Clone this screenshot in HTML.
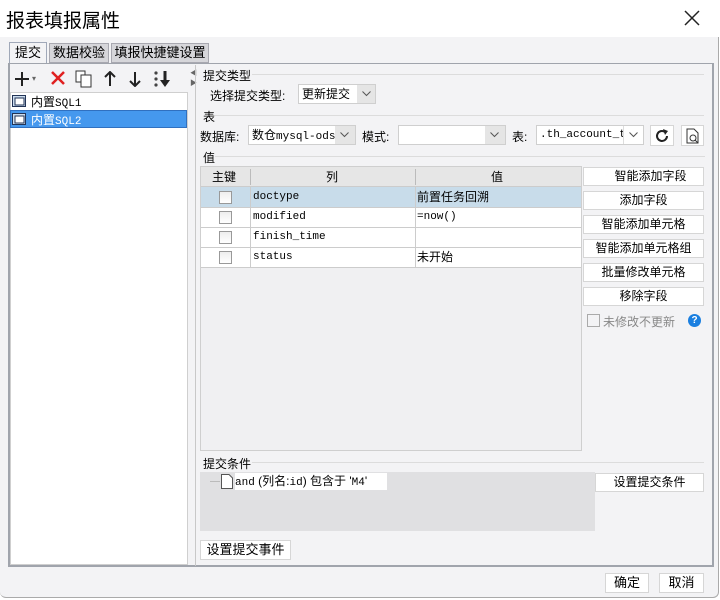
<!DOCTYPE html>
<html><head><meta charset="utf-8"><style>
*{box-sizing:border-box;margin:0;padding:0}
body{width:720px;height:600px;background:#fff;font-family:"Liberation Sans","Noto Sans CJK SC",sans-serif;font-size:12px;color:#000;position:relative;overflow:hidden}
.a{position:absolute}
.btn{position:absolute;background:#fff;border:1px solid #d6d6d6;text-align:center;font-size:12px;line-height:17px}
.mono{font-family:"Liberation Mono","Noto Sans CJK SC",monospace;font-size:11px}
.combo{position:absolute;background:#fff;border:1px solid #cfcfcf;height:20px;line-height:18px;padding-left:3px;overflow:hidden;white-space:nowrap}
.dd{position:absolute;right:0;top:0;width:20px;height:18px;background:#e5e5e5}
.dd svg{position:absolute;left:5px;top:6px}
.hl{position:absolute;height:1px;background:#dcdcdc}
.cb{position:absolute;width:13px;height:13px;border:1px solid #999;background:linear-gradient(#eee,#fff)}
.row{position:absolute;line-height:20px;height:20px}
</style></head><body>
<div class="a" style="left:0;top:0;width:719px;height:598px;background:#f3f3f5;border-right:1px solid #aaa;border-bottom:1px solid #aaa;border-radius:0 0 6px 6px"></div>
<div class="a" style="left:0;top:0;width:719px;height:37px;background:#fff"></div>
<div class="a" style="left:6px;top:6px;font-size:19px">报表填报属性</div>
<svg class="a" style="left:684px;top:10px" width="16" height="16"><path d="M1 1L15 15M15 1L1 15" stroke="#222" stroke-width="1.5"/></svg>

<div class="a" style="left:9px;top:42px;width:38px;height:22px;background:#f3f3f5;border:1px solid #a0a8b8;border-bottom:none;text-align:center;line-height:20px;font-size:13px">提交</div>
<div class="a" style="left:49px;top:43px;width:60px;height:20px;background:#d6d6da;border:1px solid #a8a8b0;text-align:center;line-height:18px;font-size:13px">数据校验</div>
<div class="a" style="left:111px;top:43px;width:98px;height:20px;background:#d6d6da;border:1px solid #a8a8b0;text-align:center;line-height:18px;font-size:13px">填报快捷键设置</div>
<div class="a" style="left:8px;top:63px;width:706px;height:504px;border:2px solid #a0a4ac;border-top:1px solid #a0a4ac"></div>

<svg class="a" style="left:15px;top:72px" width="14" height="14"><path d="M7 0V14M0 7H14" stroke="#222" stroke-width="2"/></svg>
<div class="a" style="left:32px;top:74px;font-size:8px;color:#666">▾</div>
<svg class="a" style="left:51px;top:71px" width="14" height="14"><path d="M1 1L13 13M13 1L1 13" stroke="#e02020" stroke-width="2.5"/></svg>
<svg class="a" style="left:75px;top:70px" width="18" height="18"><rect x="1" y="1" width="9" height="11" fill="#fff" stroke="#333"/><rect x="6" y="5" width="10" height="12" fill="#fff" stroke="#333"/></svg>
<svg class="a" style="left:104px;top:71px" width="12" height="16"><path d="M6 1L6 15M1 6L6 1L11 6" stroke="#222" stroke-width="2" fill="none"/></svg>
<svg class="a" style="left:129px;top:71px" width="12" height="16"><path d="M6 1L6 15M1 10L6 15L11 10" stroke="#222" stroke-width="2" fill="none"/></svg>
<svg class="a" style="left:153px;top:70px" width="20" height="18"><circle cx="3" cy="3" r="1.6" fill="#444"/><circle cx="3" cy="9" r="1.6" fill="#444"/><circle cx="3" cy="15" r="1.6" fill="#444"/><path d="M12 1L12 12" stroke="#222" stroke-width="3"/><path d="M7 10L17 10L12 17Z" fill="#222"/></svg>
<div class="a" style="left:10px;top:92px;width:178px;height:473px;background:#fff;border:1px solid #cfcfcf"></div>
<svg class="a" style="left:12px;top:95px" width="14" height="12"><rect x="0.5" y="0.5" width="13" height="11" fill="#cde" stroke="#235"/><rect x="3" y="3" width="9" height="7" fill="#fff" stroke="#235"/></svg>
<div class="a" style="left:31px;top:93px;font-size:12px">内置<span class="mono">SQL1</span></div>
<div class="a" style="left:10px;top:110px;width:177px;height:18px;background:#4598ee;border:1px solid #3070c0"></div>
<svg class="a" style="left:12px;top:113px" width="14" height="12"><rect x="0.5" y="0.5" width="13" height="11" fill="#cde" stroke="#235"/><rect x="3" y="3" width="9" height="7" fill="#fff" stroke="#235"/></svg>
<div class="a" style="left:31px;top:111px;font-size:12px;color:#fff">内置<span class="mono">SQL2</span></div>
<div class="a" style="left:190px;top:69px;font-size:7px;color:#666;line-height:10px">◀<br>▶</div>
<div class="a" style="left:195px;top:65px;width:1px;height:501px;background:#c8c8c8"></div>

<div class="a" style="left:203px;top:67px">提交类型</div><div class="hl" style="left:252px;top:74px;width:452px"></div>
<div class="a" style="left:210px;top:87px">选择提交类型:</div>
<div class="combo" style="left:298px;top:84px;width:78px">更新提交<div class="dd" style="width:18px"><svg width="9" height="6"><path d="M0.5 0.5L4.5 4.5L8.5 0.5" stroke="#555" fill="none"/></svg></div></div>
<div class="hl" style="left:210px;top:115px;width:494px"></div>
<div class="a" style="left:203px;top:108px">表</div>
<div class="a" style="left:200px;top:128px">数据库:</div>
<div class="combo" style="left:248px;top:125px;width:108px">数仓<span class="mono">mysql-ods</span><div class="dd"><svg width="9" height="6"><path d="M0.5 0.5L4.5 4.5L8.5 0.5" stroke="#555" fill="none"/></svg></div></div>
<div class="a" style="left:362px;top:128px">模式:</div>
<div class="combo" style="left:398px;top:125px;width:108px"><div class="dd"><svg width="9" height="6"><path d="M0.5 0.5L4.5 4.5L8.5 0.5" stroke="#555" fill="none"/></svg></div></div>
<div class="a" style="left:512px;top:128px">表:</div>
<div class="combo mono" style="left:536px;top:125px;width:108px">.th_account_tb<div class="dd" style="border-left:1px solid #ddd;background:#fff"><svg width="9" height="6"><path d="M0.5 0.5L4.5 4.5L8.5 0.5" stroke="#555" fill="none"/></svg></div></div>
<div class="btn" style="left:650px;top:125px;width:24px;height:21px"><svg width="16" height="16" style="margin-top:2px"><path d="M13 8A5 5 0 1 1 11 4" stroke="#222" stroke-width="2" fill="none"/><path d="M9 1L14 3L11 7Z" fill="#222"/></svg></div>
<div class="btn" style="left:681px;top:125px;width:23px;height:21px"><svg width="14" height="16" style="margin-top:2px"><path d="M1 1H8L12 5V15H1Z" fill="#fff" stroke="#333"/><circle cx="7" cy="10" r="3" fill="none" stroke="#333"/><path d="M9 12L12 15" stroke="#333"/></svg></div>
<div class="hl" style="left:215px;top:156px;width:490px"></div>
<div class="a" style="left:203px;top:149px">值</div>

<div class="a" style="left:200px;top:166px;width:382px;height:285px;background:#f0f0f2;border:1px solid #cfcfcf"></div>
<div class="a" style="left:201px;top:167px;width:380px;height:20px;background:#e6e6e6;border-bottom:1px solid #ccc"></div>
<div class="row" style="left:212px;top:167px">主键</div>
<div class="row" style="left:326px;top:167px">列</div>
<div class="row" style="left:491px;top:167px">值</div>
<div class="a" style="left:250px;top:169px;width:1px;height:16px;background:#bbb"></div>
<div class="a" style="left:415px;top:169px;width:1px;height:16px;background:#bbb"></div>
<div class="a" style="left:201px;top:187px;width:380px;height:20px;background:#c8dcea"></div>
<div class="a" style="left:201px;top:207px;width:380px;height:60px;background:#fff"></div>
<div class="hl" style="left:201px;top:207px;width:380px;background:#ccc"></div>
<div class="hl" style="left:201px;top:227px;width:380px;background:#ccc"></div>
<div class="hl" style="left:201px;top:247px;width:380px;background:#ccc"></div>
<div class="hl" style="left:201px;top:267px;width:380px;background:#ccc"></div>
<div class="a" style="left:250px;top:187px;width:1px;height:80px;background:#ccc"></div>
<div class="a" style="left:415px;top:187px;width:1px;height:80px;background:#ccc"></div>
<div class="cb" style="left:219px;top:191px"></div>
<div class="cb" style="left:219px;top:211px"></div>
<div class="cb" style="left:219px;top:231px"></div>
<div class="cb" style="left:219px;top:251px"></div>
<div class="row mono" style="left:253px;top:187px">doctype</div>
<div class="row mono" style="left:253px;top:207px">modified</div>
<div class="row mono" style="left:253px;top:227px">finish_time</div>
<div class="row mono" style="left:253px;top:247px">status</div>
<div class="row" style="left:417px;top:187px">前置任务回溯</div>
<div class="row mono" style="left:417px;top:207px">=now()</div>
<div class="row" style="left:417px;top:247px">未开始</div>

<div class="btn" style="left:583px;top:167px;width:121px;height:19px;padding-left:14px">智能添加字段</div>
<div class="btn" style="left:583px;top:191px;width:121px;height:19px">添加字段</div>
<div class="btn" style="left:583px;top:215px;width:121px;height:19px">智能添加单元格</div>
<div class="btn" style="left:583px;top:239px;width:121px;height:19px">智能添加单元格组</div>
<div class="btn" style="left:583px;top:263px;width:121px;height:19px">批量修改单元格</div>
<div class="btn" style="left:583px;top:287px;width:121px;height:19px">移除字段</div>
<div class="cb" style="left:587px;top:314px;background:#f3f3f5;border-color:#aaa"></div>
<div class="a" style="left:603px;top:313px;color:#888">未修改不更新</div>
<div class="a" style="left:688px;top:314px;width:13px;height:13px;border-radius:50%;background:#1a7fe0;color:#fff;font-size:10px;font-weight:bold;text-align:center;line-height:13px">?</div>

<div class="a" style="left:203px;top:455px">提交条件</div><div class="hl" style="left:252px;top:462px;width:452px"></div>
<div class="a" style="left:200px;top:472px;width:395px;height:59px;background:#e0e0e2"></div>
<div class="a" style="left:210px;top:481px;width:10px;height:1px;background:#bbb"></div>
<svg class="a" style="left:221px;top:474px" width="12" height="15"><path d="M0.5 0.5H8L11.5 4V14.5H0.5Z" fill="#fff" stroke="#555"/></svg>
<div class="a" style="left:235px;top:473px;width:152px;height:17px;background:#fff;line-height:16px"><span class="mono">and</span> (列名:<span class="mono">id</span>) 包含于 '<span class="mono">M4</span>'</div>
<div class="btn" style="left:595px;top:473px;width:109px;height:19px">设置提交条件</div>
<div class="btn" style="left:200px;top:540px;width:91px;height:20px;line-height:18px;font-size:13px">设置提交事件</div>

<div class="btn" style="left:605px;top:573px;width:44px;height:20px;line-height:18px;font-size:13px">确定</div>
<div class="btn" style="left:659px;top:573px;width:45px;height:20px;line-height:18px;font-size:13px">取消</div>
</body></html>
